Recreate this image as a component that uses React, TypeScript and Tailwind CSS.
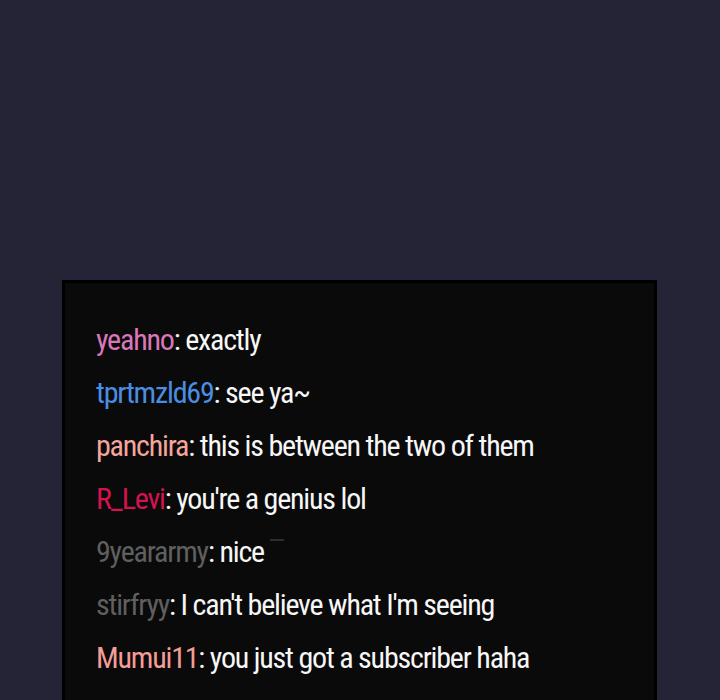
const messages = [
  { name: 'yeahno', color: 'text-[#d977bb]', text: 'exactly' },
  { name: 'tprtmzld69', color: 'text-[#4a8ee3]', text: 'see ya~' },
  { name: 'panchira', color: 'text-[#f4a69b]', text: 'this is between the two of them' },
  { name: 'R_Levi', color: 'text-[#d5124f]', text: "you're a genius lol" },
  { name: '9yeararmy', color: 'text-[#5f5f5f]', text: 'nice', mark: true },
  { name: 'stirfryy', color: 'text-[#5f5f5f]', text: "I can't believe what I'm seeing" },
  { name: 'Mumui11', color: 'text-[#f39d96]', text: 'you just got a subscriber haha' },
];

export default function App() {
  return (
    <div className="h-[700px] overflow-hidden bg-[#252437] pt-[280px] pl-[62px] pr-[63px]">
      <div className="h-[460px] border-[3px] border-black bg-[#0a0a0a] pt-[30px] pl-[31px] font-['Roboto_Condensed',sans-serif] text-[30px] leading-[53px] tracking-[-1.2px] text-[#f7f7f7]">
        {messages.map((m) => (
          <div key={m.name} className="whitespace-nowrap">
            <span className={m.color}>{m.name}</span>: {m.text}
            {m.mark && (
              <span className="ml-[6px] inline-block h-[2px] w-[14px] -translate-y-[14px] bg-[#2e2e2e] align-middle" />
            )}
          </div>
        ))}
      </div>
    </div>
  );
}
